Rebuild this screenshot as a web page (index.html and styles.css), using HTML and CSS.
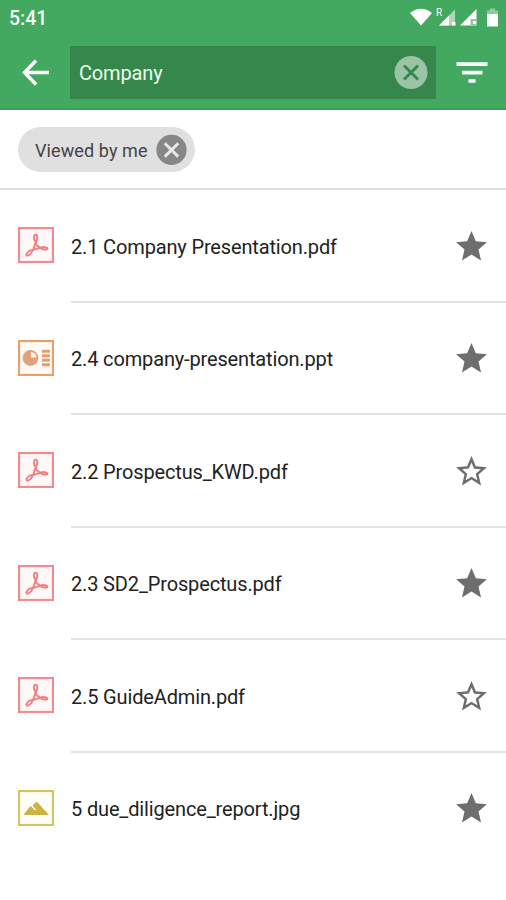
FILE: index.html
```html
<!DOCTYPE html>
<html lang="en">
  <head>
    <meta charset="utf-8" />
    <meta name="viewport" content="width=device-width" />
    <title>Search</title>
    <link rel="stylesheet" href="styles.css">
  </head>

  <body>
    <!-- shared icons -->
    <svg class="sprite" width="0" height="0">
      <symbol id="star" viewBox="0 0 24 24">
        <path d="M12 17.27L18.18 21l-1.64-7.03L22 9.24l-7.19-.61L12 2 9.19 8.63 2 9.24l5.46 4.73L5.82 21z" />
      </symbol>
      <symbol id="star-outline" viewBox="0 0 24 24">
        <path d="M22 9.24l-7.19-.62L12 2 9.19 8.63 2 9.24l5.46 4.73L5.82 21 12 17.27 18.18 21l-1.63-7.03L22 9.24zM12 15.4l-3.76 2.27 1-4.28-3.32-2.88 4.38-.38L12 6.1l1.71 4.04 4.38.38-3.32 2.88 1 4.28L12 15.4z" />
      </symbol>
      <symbol id="pdf" viewBox="0 0 36 36">
        <rect x="1" y="1" width="34" height="34" fill="#fff8f8" stroke="#f58a8e" stroke-width="2.200" />
        <g fill="none" stroke="#f27d80" stroke-width="1.900" stroke-linejoin="round">
          <ellipse cx="17.600" cy="10.800" rx="1.600" ry="3.200" />
          <path d="M18 14v3.500l4.200 3.300-7 2z" />
          <ellipse cx="11.200" cy="26" rx="3.500" ry="1.500" transform="rotate(-43 11.200 26)" />
          <ellipse cx="26.300" cy="21.300" rx="3.300" ry="1.200" transform="rotate(7 26.300 21.300)" />
          <path d="M13.500 24l2-1.500M22 20.700h1.500" />
        </g>
      </symbol>
      <symbol id="ppt" viewBox="0 0 36 36">
        <rect x="1" y="1" width="34" height="34" fill="#fffaf5" stroke="#e6a06c" stroke-width="2.200" />
        <circle cx="12.500" cy="18" r="7.900" fill="#dfa27b" />
        <path d="M13 17.500v-5.500a5.500 5.500 0 0 1 5.500 5.500z" fill="#fff3e8" />
        <path d="M24 11.200h8M24 15.700h8M24 20.200h8M24 24.700h8" stroke="#e2a06f" stroke-width="2.900" />
      </symbol>
      <symbol id="jpg" viewBox="0 0 36 36">
        <rect x="1" y="1" width="34" height="34" fill="#fffef6" stroke="#d2c460" stroke-width="2.200" />
        <path d="M5.500 25l6.200-8.200q.8-1 1.700-.2l3.600 4 1-1.200-3.500-4 3-3q1.200-1 2.300 0L31 25z" fill="#cbb348" />
      </symbol>
    </svg>

    <header class="header">
      <div class="status-bar">
        <span class="clock">5:41</span>
        <svg class="status-icons" viewBox="0 0 90 24" width="90" height="24">
          <path d="M-1 5Q10 -3.500 21 5L10 17.500z" fill="#fff" />
          <text class="roaming" x="25" y="8">R</text>
          <path d="M28 17.500L44 1.500V17.500z" fill="#a9d9b5" />
          <path d="M28 17.500L38 7.500V17.500zM41 14h3.500v3.500H41z" fill="#fff" />
          <path d="M49 17.500L65.500 1v16.500z" fill="#fff" />
          <path d="M59.500 11h6v6.500h-6z" fill="#8dc99b" />
          <path d="M62 13h3v3h-3z" fill="#fff" />
          <path d="M79 .5h5v2h3v4h-11v-4h3z" fill="#8fcb9d" />
          <path d="M76 6h11v12.500h-11z" fill="#fff" />
        </svg>
      </div>
      <div class="toolbar">
        <svg class="back" viewBox="0 0 28 28" width="28" height="28">
          <path d="M27 13.500H3M14 1.500L2.500 13.500 14 25.500" fill="none" stroke="#fff" stroke-width="3.400" />
        </svg>
        <div class="search">
          <span class="query">Company</span>
          <svg class="clear" viewBox="0 0 34 34" width="34" height="34">
            <circle cx="17" cy="16.500" r="16.500" fill="#9ac4a5" />
            <path d="M10 9.500l14 14M24 9.500L10 23.500" stroke="#36874c" stroke-width="2.900" />
          </svg>
        </div>
        <svg class="filter" viewBox="0 0 32 22" width="32" height="22">
          <path d="M.5 2.200h31M6 10.700h20.500M12.500 19h7" stroke="#fff" stroke-width="3.700" />
        </svg>
      </div>
    </header>

    <div class="filters">
      <div class="chip">
        <span class="chip-label">Viewed by me</span>
        <svg viewBox="0 0 31 31" width="31" height="31">
          <circle cx="15.500" cy="15.900" r="15.100" fill="#878787" />
          <path d="M8.800 9.200l13.400 13.400M22.200 9.200L8.800 22.600" stroke="#e8e8e8" stroke-width="2.900" />
        </svg>
      </div>
    </div>

    <ul class="files">
      <li class="file">
        <svg class="type"><use href="#pdf" /></svg>
        <div class="details">
          <span class="name">2.1 Company Presentation.pdf</span>
          <svg class="star"><use href="#star" /></svg>
        </div>
      </li>
      <li class="file">
        <svg class="type"><use href="#ppt" /></svg>
        <div class="details">
          <span class="name">2.4 company-presentation.ppt</span>
          <svg class="star"><use href="#star" /></svg>
        </div>
      </li>
      <li class="file">
        <svg class="type"><use href="#pdf" /></svg>
        <div class="details">
          <span class="name">2.2 Prospectus_KWD.pdf</span>
          <svg class="star"><use href="#star-outline" /></svg>
        </div>
      </li>
      <li class="file">
        <svg class="type"><use href="#pdf" /></svg>
        <div class="details">
          <span class="name">2.3 SD2_Prospectus.pdf</span>
          <svg class="star"><use href="#star" /></svg>
        </div>
      </li>
      <li class="file">
        <svg class="type"><use href="#pdf" /></svg>
        <div class="details">
          <span class="name">2.5 GuideAdmin.pdf</span>
          <svg class="star"><use href="#star-outline" /></svg>
        </div>
      </li>
      <li class="file">
        <svg class="type"><use href="#jpg" /></svg>
        <div class="details">
          <span class="name">5 due_diligence_report.jpg</span>
          <svg class="star"><use href="#star" /></svg>
        </div>
      </li>
    </ul>
  </body>
</html>
```
FILE: styles.css
```css
* {
  box-sizing: border-box;
}

body {
  margin: 0;
  height: 900px;
  overflow: hidden;
  background: #fff;
  color: #222;
  font-family: Roboto, sans-serif;
}

svg {
  display: block;
  flex: none;
}

.sprite {
  position: absolute;
}

.status-icons {
  overflow: visible;
}

.header {
  height: 110px;
  background: #43a961;
  border-bottom: 2px solid #35a256;
}

.status-bar {
  display: flex;
  justify-content: space-between;
  height: 46px;
  padding: 8px 5px 0 9px;
}

.clock {
  color: #f3fff3;
  font-size: 19.5px;
  font-weight: 500;
  line-height: 21px;
}

.roaming {
  fill: #fff;
  font-size: 10px;
}

.toolbar {
  display: flex;
  align-items: center;
  height: 53px;
  padding-left: 22px;
}

.search {
  display: flex;
  align-items: center;
  justify-content: space-between;
  width: 366px;
  height: 53px;
  margin: 0 20px 0 20px;
  padding: 0 8px 0 9px;
  background: #36874c;
}

.query {
  color: #eaffe9;
  font-size: 20px;
  letter-spacing: -0.15px;
}

.filters {
  height: 80px;
  padding: 17px 18px;
  border-bottom: 2px solid #dfdfdf;
}

.chip {
  display: flex;
  align-items: center;
  justify-content: space-between;
  width: 177px;
  height: 45px;
  padding: 0 8px 0 17px;
  border-radius: 23px;
  background: #e0e0e0;
}

.chip-label {
  padding-top: 2px;
  color: #444;
  font-size: 18px;
  letter-spacing: 0.1px;
}

.files {
  margin: 0;
  padding: 0;
  list-style: none;
}

.file {
  display: flex;
  align-items: center;
  height: 112.5px;
  padding-left: 18px;
}

.type {
  width: 36px;
  height: 36px;
  margin: 0 17px 2px 0;
}

.details {
  display: flex;
  flex: 1;
  align-items: center;
  justify-content: space-between;
  height: 100%;
  padding: 2px 16px 0 0;
  border-bottom: 2px solid #e2e2e2;
}

.file:last-child .details {
  border-bottom-color: transparent;
}

.name {
  padding-top: 1px;
  font-size: 20px;
  letter-spacing: -0.15px;
}

.star {
  width: 37px;
  height: 37px;
  fill: #6e6e6e;
}
```
